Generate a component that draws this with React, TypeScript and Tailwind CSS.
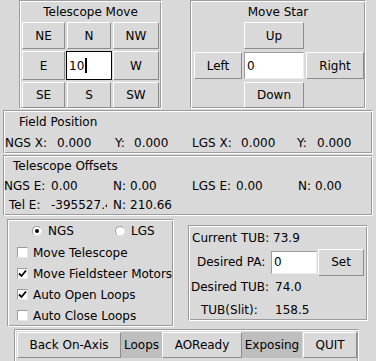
import type { ReactNode } from "react";
import clsx from "clsx";

function Frame({ className, children }: { className?: string; children: ReactNode }) {
  return (
    <div
      className={clsx(
        "border border-[#9c9c9c] border-r-white border-b-white shadow-[inset_1px_1px_0_#ffffff,inset_-1px_-1px_0_#9c9c9c]",
        className
      )}
    >
      {children}
    </div>
  );
}

function Btn({ children, className }: { children: ReactNode; className?: string }) {
  return (
    <div
      className={clsx(
        "flex items-center justify-center border border-white border-r-[#8c8c8c] border-b-[#8c8c8c] bg-[#d9d9d9]",
        className
      )}
    >
      {children}
    </div>
  );
}

function Entry({ value, focused, className }: { value: string; focused?: boolean; className?: string }) {
  return (
    <div
      className={clsx(
        "flex items-center bg-white pl-[2px]",
        focused ? "border border-black" : "border border-[#9c9c9c] border-r-[#eeeeee] border-b-[#eeeeee]",
        className
      )}
    >
      <span>{value}</span>
      {focused && <span className="ml-[1px] h-[15px] w-[2px] bg-black" />}
    </div>
  );
}

function Radio({ on, label }: { on?: boolean; label: string }) {
  return (
    <div className="flex items-center">
      <span className="flex h-[10px] w-[10px] items-center justify-center rounded-full border border-[#9c9c9c] border-r-[#e8e8e8] border-b-[#e8e8e8] bg-white">
        {on && <span className="h-[4px] w-[4px] rounded-full bg-black" />}
      </span>
      <span className="ml-[6px]">{label}</span>
    </div>
  );
}

function Check({ on, label }: { on?: boolean; label: string }) {
  return (
    <div className="flex h-[21px] items-center pl-[9px]">
      <span className="flex h-[11px] w-[11px] items-center justify-center border border-[#9c9c9c] border-r-[#e8e8e8] border-b-[#e8e8e8] bg-white">
        {on && (
          <svg width="9" height="9" viewBox="0 0 9 9">
            <path d="M1 4.5 L3.5 7 L8 1.5" fill="none" stroke="black" strokeWidth="1.8" />
          </svg>
        )}
      </span>
      <span className="ml-[5px]">{label}</span>
    </div>
  );
}

export default function App() {
  return (
    <div className="h-[361px] w-[376px] overflow-hidden bg-[#d9d9d9] font-['DejaVu_Sans',sans-serif] text-[12px] leading-[14px] text-black">
      {/* top row */}
      <div className="flex h-[109px] gap-[28px] pl-[19px]">
        <Frame className="w-[143px]">
          <div className="flex h-[21px] items-center justify-center">Telescope Move</div>
          <div className="grid grid-cols-[43px_44px_46px] grid-rows-[27px_29px_26px] gap-[2px] pl-[2px]">
            <Btn>NE</Btn>
            <Btn>N</Btn>
            <Btn>NW</Btn>
            <Btn>E</Btn>
            <Entry value="10" focused className="-ml-[1px] w-[46px]" />
            <Btn>W</Btn>
            <Btn>SE</Btn>
            <Btn>S</Btn>
            <Btn>SW</Btn>
          </div>
        </Frame>
        <Frame className="w-[176px]">
          <div className="flex h-[21px] items-center justify-center">Move Star</div>
          <div className="grid grid-cols-[48px_60px_58px] grid-rows-[27px_29px_26px] gap-x-[2px] gap-y-[2px] pl-[3px]">
            <div />
            <Btn>Up</Btn>
            <div />
            <Btn className="h-[27px] self-center">Left</Btn>
            <Entry value="0" className="h-[27px] self-center" />
            <Btn className="h-[27px] self-center">Right</Btn>
            <div />
            <Btn>Down</Btn>
            <div />
          </div>
        </Frame>
      </div>

      {/* field position */}
      <Frame className="ml-[3px] mt-[1px] h-[44px] w-[370px]">
        <div className="flex h-[21px] items-center pl-[15px]">Field Position</div>
        <div className="flex h-[21px] items-center pl-[1px]">
          <span className="w-[52px]">NGS X:</span>
          <span className="w-[58px]">0.000</span>
          <span className="w-[19px]">Y:</span>
          <span className="w-[58px]">0.000</span>
          <span className="w-[49px]">LGS X:</span>
          <span className="w-[56px]">0.000</span>
          <span className="w-[20px]">Y:</span>
          <span>0.000</span>
        </div>
      </Frame>

      {/* telescope offsets */}
      <Frame className="ml-[3px] mt-[1px] h-[61px] w-[370px]">
        <div className="flex h-[20px] items-center pl-[9px]">Telescope Offsets</div>
        <div className="flex h-[19px] items-center">
          <span className="w-[47px]">NGS E:</span>
          <span className="w-[62px]">0.00</span>
          <span className="w-[17px]">N:</span>
          <span className="w-[62px]">0.00</span>
          <span className="w-[44px]">LGS E:</span>
          <span className="w-[62px]">0.00</span>
          <span className="w-[17px]">N:</span>
          <span>0.00</span>
        </div>
        <div className="flex h-[20px] items-center pl-[5px]">
          <span className="w-[42px]">Tel E:</span>
          <span className="w-[56px] overflow-hidden whitespace-nowrap">-395527.4</span>
          <span className="ml-[6px] w-[17px]">N:</span>
          <span>210.66</span>
        </div>
      </Frame>

      {/* lower panels */}
      <div className="mt-[3px] flex items-start pl-[7px]">
        <Frame className="h-[108px] w-[167px]">
          <div className="flex h-[22px] items-center pl-[24px]">
            <div className="w-[83px]">
              <Radio on label="NGS" />
            </div>
            <Radio label="LGS" />
          </div>
          <Check label="Move Telescope" />
          <Check on label="Move Fieldsteer Motors" />
          <Check on label="Auto Open Loops" />
          <Check label="Auto Close Loops" />
        </Frame>
        <Frame className="ml-[14px] mt-[6px] h-[96px] w-[180px]">
          <div className="flex h-[23px] items-center pl-[3px]">Current TUB: 73.9</div>
          <div className="flex h-[26px] items-center pl-[8px]">
            <span className="w-[74px]">Desired PA:</span>
            <Entry value="0" className="h-[23px] w-[46px]" />
            <Btn className="ml-[1px] h-[27px] w-[46px]">Set</Btn>
          </div>
          <div className="flex h-[24px] items-center pl-[2px]">
            <span className="w-[84px]">Desired TUB:</span>
            <span>74.0</span>
          </div>
          <div className="flex h-[21px] items-center pl-[12px]">
            <span className="w-[74px]">TUB(Slit):</span>
            <span>158.5</span>
          </div>
        </Frame>
      </div>

      {/* bottom bar */}
      <Frame className="ml-[14px] mt-[2px] h-[34px] w-[345px]">
        <div className="flex pl-[2px] pt-[2px]">
          <Btn className="h-[26px] w-[104px]">Back On-Axis</Btn>
          <div className="flex h-[26px] w-[41px] items-center justify-center bg-[#bebebe]">Loops</div>
          <Btn className="h-[26px] w-[80px]">AOReady</Btn>
          <div className="flex h-[26px] w-[60px] items-center justify-center bg-[#bebebe]">Exposing</div>
          <Btn className="ml-[1px] h-[26px] w-[54px]">QUIT</Btn>
        </div>
      </Frame>
    </div>
  );
}
